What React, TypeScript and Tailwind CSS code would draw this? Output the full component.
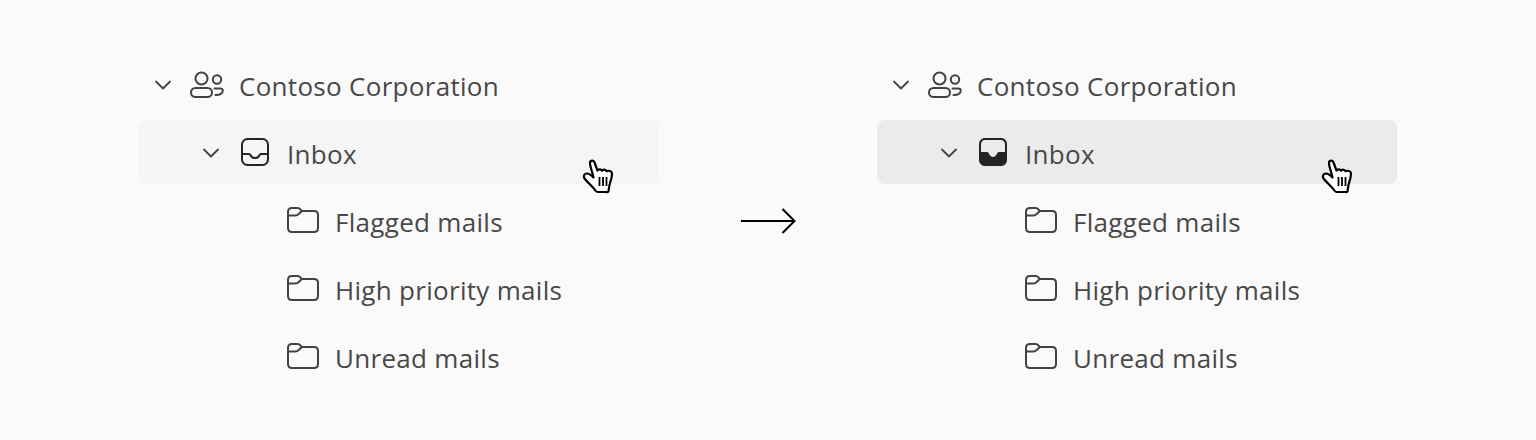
const Chevron = () => (
  <svg width="18" height="12" viewBox="0 0 18 12" fill="none" className="mt-[2px] shrink-0">
    <path d="M2 2.5 L9 9.5 L16 2.5" stroke="#424242" strokeWidth="1.8" strokeLinecap="round" strokeLinejoin="round" />
  </svg>
);

const People = () => (
  <svg width="36" height="28" viewBox="0 0 36 28" fill="none" className="shrink-0">
    <circle cx="12.5" cy="8.5" r="6" stroke="#424242" strokeWidth="2" />
    <rect x="2" y="18" width="21" height="9" rx="4.5" stroke="#424242" strokeWidth="2" />
    <circle cx="28" cy="9.5" r="4.2" stroke="#424242" strokeWidth="2" />
    <path d="M25.5 18.5 H31 C32.8 18.5 33.8 19.4 33.8 20.6 C33.8 23.4 31 25.2 26.5 25" stroke="#424242" strokeWidth="2" strokeLinecap="round" />
  </svg>
);

const InboxOutline = () => (
  <svg width="30" height="30" viewBox="0 0 30 30" fill="none" className="shrink-0">
    <rect x="2" y="2" width="26" height="26" rx="5.5" stroke="#242424" strokeWidth="2" />
    <path d="M2.5 17 H9 C10 17 10.3 17.6 10.7 18.5 C11.5 20.2 13 21 15 21 C17 21 18.5 20.2 19.3 18.5 C19.7 17.6 20 17 21 17 H27.5" stroke="#242424" strokeWidth="2" />
  </svg>
);

const InboxFilled = () => (
  <svg width="30" height="30" viewBox="0 0 30 30" fill="none" className="shrink-0">
    <path d="M7 1 H23 C26.3 1 29 3.7 29 7 V23 C29 26.3 26.3 29 23 29 H7 C3.7 29 1 26.3 1 23 V7 C1 3.7 3.7 1 7 1 Z" fill="#242424" />
    <path d="M3 15 V7 C3 4.8 4.8 3 7 3 H23 C25.2 3 27 4.8 27 7 V15 H21 C19.8 15 19.4 15.8 19 16.8 C18.2 18.6 16.8 20 15 20 C13.2 20 11.8 18.6 11 16.8 C10.6 15.8 10.2 15 9 15 Z" fill="#ebebeb" />
  </svg>
);

const Folder = () => (
  <svg width="34" height="28" viewBox="0 0 34 28" fill="none" className="shrink-0">
    <path d="M2 6 C2 3.5 3.7 2 6 2 H11.5 C12.8 2 13.8 2.6 14.4 3.4 L15.8 5 H28 C30.4 5 32 6.6 32 9 V22 C32 24.4 30.4 26 28 26 H6 C3.6 26 2 24.4 2 22 Z" stroke="#424242" strokeWidth="2" strokeLinejoin="round" />
    <path d="M2 9.5 H9.5 C10.8 9.5 11.6 9.1 12.4 8.3 L15.8 5" stroke="#424242" strokeWidth="2" strokeLinejoin="round" />
  </svg>
);

const Hand = () => (
  <svg width="32" height="36" viewBox="0 0 32 36" fill="none">
    <path
      d="M8 5 C8 2.5 11.5 1.5 12.5 4.5 L15.5 12.5 C16.5 10.8 19 11 20 12.8 C21 11 23.5 11.4 24.5 13.2 C26 12.2 30 13 30 15.5 C30 19 29.5 21 28 25 C27 28 27 31 26.5 33 C26.3 34 25.5 34.5 24.5 34 H15.5 C14.5 34 14 33.5 13 32 C11 29 6 25 2.5 20.5 C1 18 2.5 15.5 5 15.5 C7 15.5 9 17 11.5 19.5 C10.5 14 8 9 8 5 Z"
      fill="#fff"
      stroke="#000"
      strokeWidth="2.2"
      strokeLinejoin="round"
    />
    <path d="M17.5 19 V28 M21 19 V28 M24.5 19 V28" stroke="#000" strokeWidth="1.8" />
  </svg>
);

const Arrow = () => (
  <svg width="56" height="30" viewBox="0 0 56 30" fill="none" className="shrink-0">
    <path d="M1 15 H54 M42.5 3 L54.5 15 L42.5 27" stroke="#000" strokeWidth="2" />
  </svg>
);

const Row = ({ children, className = "" }: { children: React.ReactNode; className?: string }) => (
  <div className={`flex h-16 items-center text-[#484848] ${className}`}>{children}</div>
);

const Tree = ({ active }: { active: boolean }) => (
  <div className="flex w-[520px] shrink-0 flex-col gap-1">
    <Row className="pl-[15px]">
      <Chevron />
      <span className="ml-[17px]"><People /></span>
      <span className="ml-[14px] mt-[5px]">Contoso Corporation</span>
    </Row>
    <Row className={`relative rounded-lg pl-[63px] ${active ? "bg-[#ebebeb]" : "bg-[#f5f5f5]"}`}>
      <Chevron />
      <span className="ml-[20px]">{active ? <InboxFilled /> : <InboxOutline />}</span>
      <span className="ml-[17px] mt-[5px]">Inbox</span>
      <span className={`absolute top-[38px] ${active ? "left-[444px]" : "left-[443px]"}`}><Hand /></span>
    </Row>
    {["Flagged mails", "High priority mails", "Unread mails"].map((label) => (
      <Row key={label} className="pl-[147px]">
        <Folder />
        <span className="ml-[15px] mt-[5px]">{label}</span>
      </Row>
    ))}
  </div>
);

export default function App() {
  return (
    <div className="flex h-[440px] w-[1536px] items-center justify-center bg-[#fafafa] font-['Open_Sans',sans-serif] text-[26px] tracking-[0.3px]">
      <div className="flex items-center">
        <Tree active={false} />
        <div className="mx-[81px] mt-[2px]"><Arrow /></div>
        <Tree active={true} />
      </div>
    </div>
  );
}
